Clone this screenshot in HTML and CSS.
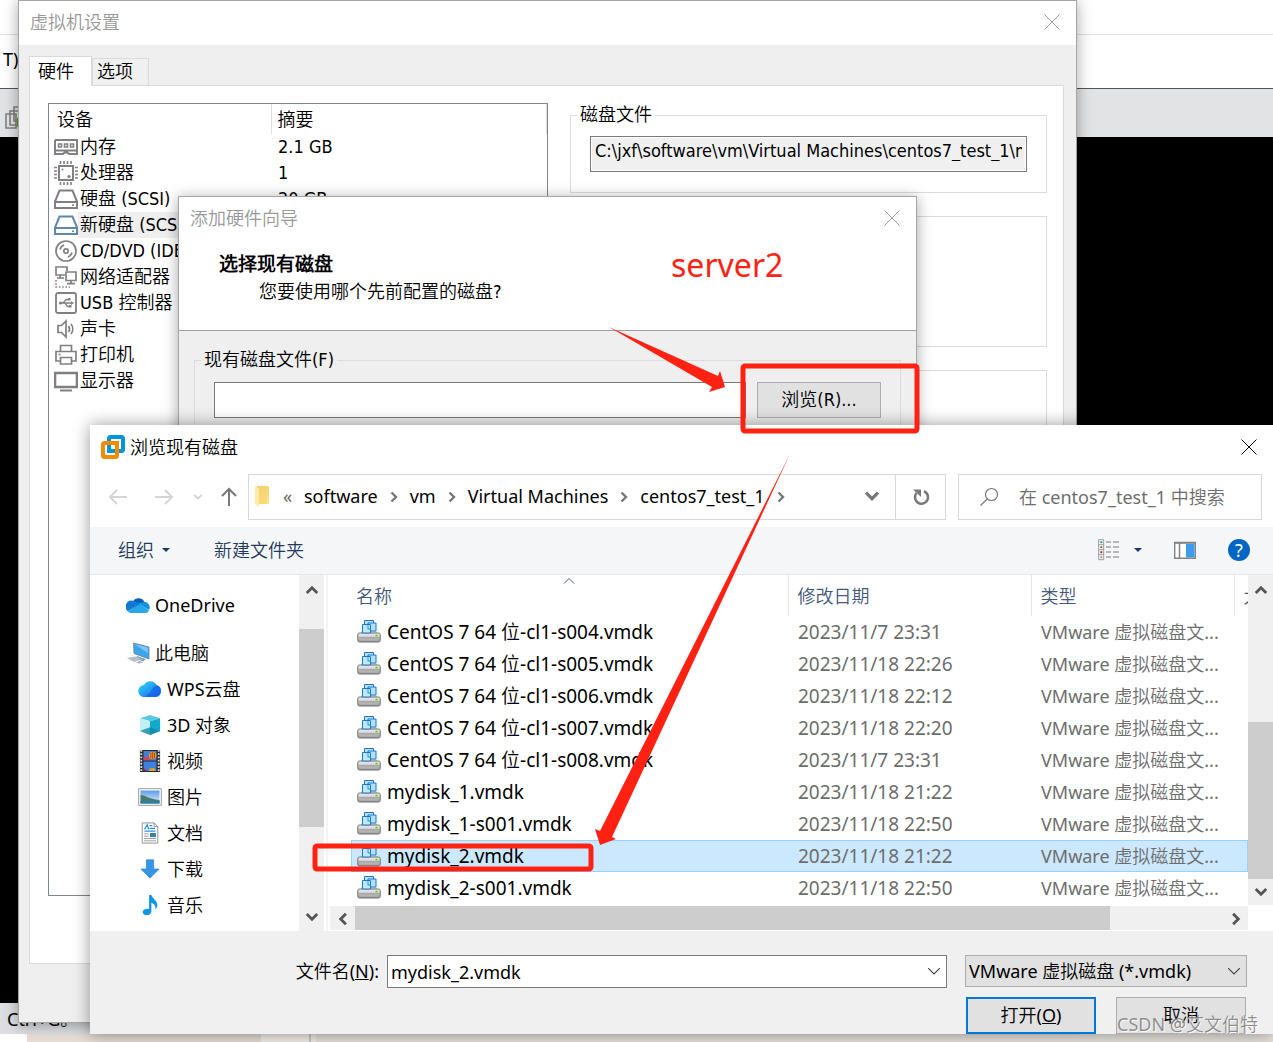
FILE: index.html
```html
<!DOCTYPE html>
<html lang="zh-CN">
<head>
<meta charset="utf-8">
<title>浏览现有磁盘</title>
<link rel="stylesheet" href="styles.css">
</head>
<body>
<svg class="sprite" aria-hidden="true">
  <defs>
    <linearGradient id="g-drive" x1="0" y1="0" x2="0" y2="1"><stop offset="0" stop-color="#f4f4f4"/><stop offset="1" stop-color="#9a9a9a"/></linearGradient>
    <linearGradient id="g-wps" x1="0" y1="0" x2="1" y2="1"><stop offset="0" stop-color="#2fe0f0"/><stop offset="1" stop-color="#1a5cf0"/></linearGradient>
    <linearGradient id="g-fold" x1="0" y1="0" x2="1" y2="1"><stop offset="0" stop-color="#f3cf6a"/><stop offset="1" stop-color="#fbdd80"/></linearGradient>
    <linearGradient id="g-sky" x1="0" y1="0" x2="0" y2="1"><stop offset="0" stop-color="#5b9be8"/><stop offset="1" stop-color="#e6f3fb"/></linearGradient>
  </defs>
  <symbol id="i-close" viewBox="0 0 16 16"><path d="M.5 .5l15 15M15.500 .5l-15 15" fill="none" stroke="currentColor" stroke-width="1"/></symbol>
  <symbol id="i-mem" viewBox="0 0 24 24"><g fill="none" stroke="#808080" stroke-width="2"><path d="M1 5h22v3M1 5V19h8l1.500-1.500h3L15 19h8V8M1 15.500h22"/><path d="M4.500 9h3v3h-3zM10.500 9h3v3h-3zM16.500 9h3v3h-3z" stroke-width="1.600"/></g></symbol>
  <symbol id="i-cpu" viewBox="0 0 24 24"><g fill="none" stroke="#808080"><rect x="5" y="5" width="14" height="14" stroke-width="2"/><path stroke-width="1.600" d="M6.500 0v3M10 0v3M13.500 0v3M17 0v3M6.500 21v3M10 21v3M13.500 21v3M17 21v3M0 6.500h3M0 10h3M0 13.500h3M0 17h3M21 6.500h3M21 10h3M21 13.500h3M21 17h3"/></g><circle cx="8.500" cy="8.500" r="1" fill="#808080"/><circle cx="15" cy="15.500" r="1.600" fill="#808080"/></symbol>
  <symbol id="i-disk" viewBox="0 0 24 24"><path d="M5.500 3.500h13L23 14.500V21H1v-6.500zM1 15h22" fill="none" stroke="currentColor" stroke-width="2"/><path d="M18 18.200h2" stroke="currentColor" stroke-width="1.600"/></symbol>
  <symbol id="i-cd" viewBox="0 0 24 24"><g fill="none" stroke="#808080" stroke-width="1.700"><circle cx="12" cy="12" r="10"/><circle cx="12" cy="12" r="2.200"/><path d="M6 10.500a6.500 6.500 0 0 1 4-4.500M18 13.500a6.500 6.500 0 0 1-4 4.500"/></g></symbol>
  <symbol id="i-net" viewBox="0 0 24 24"><g fill="none" stroke="#808080" stroke-width="1.700"><path d="M13 6V2H2v8h9M6 10v2.500M3 13h7M12 7h10v8.500H12zM17 15.500V18M13 18.700h8"/><path d="M2 15v7h14" stroke-dasharray="1.500 1.800"/></g></symbol>
  <symbol id="i-usb" viewBox="0 0 24 24"><rect x="2" y="2" width="20" height="20" rx="2" fill="none" stroke="#808080" stroke-width="1.800"/><path d="M6 12h12M9 12l3-3.500h2.500M11 12l2.500 3.500h2" fill="none" stroke="#808080" stroke-width="1.300"/><circle cx="6.500" cy="12" r="1.500" fill="#808080"/><path d="M17 10l3 2-3 2zM14 7h2.500v2.500H14zM15 14h2.500v2.500H15z" fill="#808080"/></symbol>
  <symbol id="i-sound" viewBox="0 0 24 24"><g fill="none" stroke="#808080" stroke-width="1.700"><path d="M4 8.500h3.500L12 4v16l-4.500-4.500H4z"/><path d="M14.500 9a5 5 0 0 1 0 6M17 7a8 8 0 0 1 0 10"/></g></symbol>
  <symbol id="i-print" viewBox="0 0 24 24"><g fill="none" stroke="#808080" stroke-width="1.700"><path d="M6.500 8V2.500h11V8M6 18H2V8.500h20V18h-4M6.500 14.500h11v6.500h-11z"/><path d="M4.500 11.500h2"/></g></symbol>
  <symbol id="i-screen" viewBox="0 0 24 24"><path d="M1 4h22v14H1z" fill="#fff" stroke="#808080" stroke-width="2.600"/><path d="M6 21.500h12" stroke="#808080" stroke-width="2"/></symbol>
  <symbol id="i-vm" viewBox="0 0 24 24"><rect x="8" y="2" width="14" height="14" rx="1.500" fill="none" stroke="#0095d9" stroke-width="4"/><rect x="2" y="8" width="14" height="14" rx="1.500" fill="none" stroke="#f38b00" stroke-width="4"/><path d="M8 9v7h6" fill="none" stroke="#0095d9" stroke-width="4"/><path d="M4 8h12v6" fill="none" stroke="#f38b00" stroke-width="4"/></symbol>
  <symbol id="i-arrow" viewBox="0 0 20 20"><path d="M19 10H2M9 3l-7 7 7 7" fill="none" stroke="currentColor" stroke-width="2"/></symbol>
  <symbol id="i-chev" viewBox="0 0 12 12"><path d="M1.500 3.500L6 8l4.500-4.500" fill="none" stroke="currentColor" stroke-width="2.400"/></symbol>
  <symbol id="i-thin" viewBox="0 0 12 12"><path d="M1 3.500l5 5 5-5" fill="none" stroke="currentColor" stroke-width="1"/></symbol>
  <symbol id="i-caret" viewBox="0 0 8 8"><path d="M0 2h8L4 6z" fill="#1e395b"/></symbol>
  <symbol id="i-folder" viewBox="0 0 16 22"><path d="M3 1h12v18H4z" fill="url(#g-fold)"/><path d="M1 1l4 2.500v18L1 19z" fill="#ffe9a6"/><path d="M13 12l2 2v5h-2z" fill="#ffe08a"/></symbol>
  <symbol id="i-refresh" viewBox="0 0 18 18"><path d="M12 3.200A6.500 6.500 0 1 1 4.500 5" fill="none" stroke="#7a7a7a" stroke-width="2.600"/><path d="M1 1.500h8V9z" fill="#7a7a7a"/></symbol>
  <symbol id="i-search" viewBox="0 0 20 20"><circle cx="12.500" cy="7.500" r="6" fill="none" stroke="#7a7a7a" stroke-width="1.200"/><path d="M8.300 12L1.500 18.500" stroke="#7a7a7a" stroke-width="1.300"/></symbol>
  <symbol id="i-view" viewBox="0 0 22 22"><path d="M.7 .7h5v20h-5zM.7 5.700h5M.7 10.700h5M.7 15.700h5" fill="#fff" stroke="#999"/><path d="M8 3h5m2 0h6M8 8h5m2 0h6M8 13h5m2 0h6M8 18h5m2 0h6" stroke="#777"/><path d="M2.300 2.200h2v2h-2z" fill="#29a"/><path d="M2.300 7.200h2v2h-2z" fill="#863"/><path d="M2.300 12.200h2v2h-2z" fill="#b22"/><path d="M2.300 17.200h2v2h-2z" fill="#999"/></symbol>
  <symbol id="i-pane" viewBox="0 0 22 18"><path d="M.7 1.500h20.600v15.800H.7z" fill="#fff" stroke="#838383" stroke-width="1.400"/><path d="M.7 2h20.600M5.500 2v15" stroke="#838383" stroke-width="1.500"/><path d="M12 3h8.500v13.500H12z" fill="#3d9be9"/></symbol>
  <symbol id="i-cloud" viewBox="0 0 24 18"><path d="M7 5.500A6.500 6.500 0 0 1 18.500 6L12 12z" fill="#0a5fb8"/><path d="M7 4.800A6 6 0 0 0 1.500 15l14-6.500z" fill="#1079d4"/><path d="M12 7.500l6.500-1.700A5.500 5.500 0 0 1 23 14z" fill="#1490df"/><path d="M1.500 15L14 8l9 6.500A3.500 3.500 0 0 1 20 17H5a5 5 0 0 1-3.500-2z" fill="#28a8ea"/></symbol>
  <symbol id="i-pc" viewBox="0 0 24 24"><path d="M7.500 2L23 6v12L8 12.500z" fill="#3aa6f0" stroke="#6d7f8e" stroke-width=".8"/><path d="M8 3l14 9V6.500z" fill="#7cc6f8"/><path d="M11 15l9 3-3 2.500-8-3z" fill="#8aa3b5"/><path d="M1 17l8-1.500 7 3-8 2.500z" fill="#b8bec4"/><path d="M10 21.500l4-1.500 3 1.500-4 1z" fill="#a5adb4"/></symbol>
  <symbol id="i-wps" viewBox="0 0 24 20"><path d="M6.500 18a6 6 0 0 1-.5-12 7 7 0 0 1 12.500 0A6.200 6.200 0 0 1 17.500 18z" fill="url(#g-wps)"/><path d="M9 16c4-1 5-9 10-9.700A6 6 0 0 1 17.500 18H7z" fill="#1264ec" opacity=".75"/></symbol>
  <symbol id="i-cube" viewBox="0 0 24 24"><path d="M12 1l11 3.500-11 3.500L1 4.500z" fill="#58c9e0"/><path d="M1 4.500L12 8v15L1 18.500z" fill="#c3eef2"/><path d="M23 4.500L12 8v15l11-4.500z" fill="#12a9cf"/><path d="M1 18.500l11-4 11 4L12 23z" fill="#138ba5" opacity=".8"/></symbol>
  <symbol id="i-film" viewBox="0 0 24 24"><path d="M1 0h22v24H1z" fill="#2b2b2b"/><path d="M5 1h14v10.500H5zM5 12.500h14V23H5z" fill="#3f7fe0"/><path d="M2.500 0v24M21.500 0v24" stroke="#ddd" stroke-width="2" stroke-dasharray="2 1.500"/><circle cx="15" cy="6" r="4" fill="#e8b020"/><path d="M15 2v8M13 3v6M17 3v6" stroke="#b3261e" fill="none"/><path d="M5 8l5-1 3 4H5z" fill="#d0485a"/><path d="M11 23a3.500 3.500 0 0 1 7 0z" fill="#e0a61c"/><path d="M5 20l4 3H5z" fill="#c14"/></symbol>
  <symbol id="i-pic" viewBox="0 0 24 18"><path d="M.7 .7h22.600v16.600H.7z" fill="#fff" stroke="#9a9a9a"/><path d="M2.500 2.500h19v13h-19z" fill="url(#g-sky)"/><path d="M2.500 7c5 0 8 4 19 5v3.500h-19z" fill="#4a7b6b"/><path d="M2.500 13h19v2.500h-19z" fill="#2e7dab"/></symbol>
  <symbol id="i-doc" viewBox="0 0 24 24"><path d="M3.500 1h13l4 4v18h-17z" fill="#fff" stroke="#8a8a8a"/><path d="M16.500 1v4h4" fill="none" stroke="#8a8a8a"/><path d="M6 8l3-5 1.500 5M11.500 4h3M11.500 7h6M6 10h12" stroke="#2d8fe0" stroke-width="1.400" fill="none"/><path d="M5.500 13h5M5.500 15.500h5M5.500 18h13M5.500 20.500h13" stroke="#999"/><path d="M12 12h6.500v4.500H12z" fill="#3a7fa8"/></symbol>
  <symbol id="i-down" viewBox="0 0 24 24"><path d="M8 2h8v10h6L12 22 2 12h6z" fill="#3795e8" stroke="#2b80cf" stroke-width=".7"/></symbol>
  <symbol id="i-note" viewBox="0 0 24 24"><path d="M11 1h2.500c1 4 6.500 6 6.500 11 0 2-.8 3.500-2 5 .5-4-1.500-6.500-4.500-7.500V19c0 2.500-2.500 4-5 4S4 21.500 4 19.500 6.500 16 9 16c.8 0 1.500.1 2 .4z" fill="#0f95ea"/></symbol>
  <symbol id="i-vmdk" viewBox="0 0 24 24"><path d="M3 14l2.500-4h13L21 14z" fill="#e2e2e2"/><rect x=".8" y="13" width="22.400" height="9" rx="1.800" fill="url(#g-drive)" stroke="#6d6d6d"/><path d="M2 17.800h20" stroke="#8f8f8f" stroke-width=".8"/><circle cx="19.500" cy="15.500" r="1.100" fill="#4be01c"/><g fill="#b5e2fd" stroke="#1c77c9" stroke-width="1"><path d="M7.500 .5h9v8h-9z"/><path d="M11 3h8v8h-8z"/><path d="M5.500 4.500h8v8.500h-8z" fill="#bfe8ff"/></g><path d="M11 4.500v4.500h2.500" fill="none" stroke="#1c77c9" stroke-width=".8"/></symbol>
  <symbol id="i-stack" viewBox="0 0 24 24"><g fill="#e4e5e7" stroke="#808080" stroke-width="1.600"><path d="M1 8h10v14H1zM5 5h10v14H5zM9 1h10v14H9z"/></g><path d="M12 12h12v9H12z" fill="#5aa02c"/></symbol>
</svg>

<main class="desktop">
  <div class="host">
    <div class="host-title"></div>
    <div class="host-menu">T)</div>
    <div class="host-tools"><svg width="24" height="24"><use href="#i-stack"/></svg></div>
    <div class="host-screen"></div>
    <div class="host-status">Ctrl+G。</div>
    <div class="host-strip"></div>
  </div>

  <section class="win settings" aria-label="虚拟机设置">
    <header class="bar">
      <h2>虚拟机设置</h2>
      <button class="x" aria-label="关闭"><svg width="16" height="16"><use href="#i-close"/></svg></button>
    </header>
    <div class="settings-body">
      <div class="tabs" role="tablist">
        <button class="tab on" role="tab">硬件</button>
        <button class="tab" role="tab">选项</button>
      </div>
      <div class="panel">
        <div class="devices">
          <table>
            <colgroup><col class="c-dev"><col></colgroup>
            <thead><tr><th>设备</th><th>摘要</th></tr></thead>
            <tbody>
              <tr><td><div><svg><use href="#i-mem"/></svg><span>内存</span></div></td><td>2.1 GB</td></tr>
              <tr><td><div><svg><use href="#i-cpu"/></svg><span>处理器</span></div></td><td>1</td></tr>
              <tr><td><div><svg><use href="#i-disk"/></svg><span>硬盘 (SCSI)</span></div></td><td>20 GB</td></tr>
              <tr class="picked"><td><div><svg><use href="#i-disk"/></svg><span>新硬盘 (SCSI)</span></div></td><td></td></tr>
              <tr><td><div><svg><use href="#i-cd"/></svg><span>CD/DVD (IDE)</span></div></td><td></td></tr>
              <tr><td><div><svg><use href="#i-net"/></svg><span>网络适配器</span></div></td><td></td></tr>
              <tr><td><div><svg><use href="#i-usb"/></svg><span>USB 控制器</span></div></td><td></td></tr>
              <tr><td><div><svg><use href="#i-sound"/></svg><span>声卡</span></div></td><td></td></tr>
              <tr><td><div><svg><use href="#i-print"/></svg><span>打印机</span></div></td><td></td></tr>
              <tr><td><div><svg><use href="#i-screen"/></svg><span>显示器</span></div></td><td></td></tr>
            </tbody>
          </table>
        </div>
        <div class="groups">
          <fieldset>
            <legend>磁盘文件</legend>
            <input class="path" aria-label="磁盘文件" readonly value="C:\jxf\software\vm\Virtual Machines\centos7_test_1\mydisk_1.vmdk">
          </fieldset>
          <fieldset class="mid"></fieldset>
          <fieldset class="rest"></fieldset>
        </div>
      </div>
    </div>
  </section>

  <section class="win wizard" aria-label="添加硬件向导">
    <header class="bar">
      <h2>添加硬件向导</h2>
      <button class="x" aria-label="关闭"><svg width="16" height="16"><use href="#i-close"/></svg></button>
    </header>
    <div class="wizard-head">
      <h3>选择现有磁盘</h3>
      <p>您要使用哪个先前配置的磁盘?</p>
    </div>
    <div class="wizard-body">
      <fieldset>
        <legend>现有磁盘文件(F)</legend>
        <div class="pick">
          <input aria-label="现有磁盘文件(F)">
          <button>浏览(R)...</button>
        </div>
      </fieldset>
    </div>
  </section>

  <section class="browse" aria-label="浏览现有磁盘">
    <header class="bar">
      <svg width="24" height="24"><use href="#i-vm"/></svg>
      <h2>浏览现有磁盘</h2>
      <button class="x" aria-label="关闭"><svg width="16" height="16"><use href="#i-close"/></svg></button>
    </header>
    <div class="nav">
      <div class="nav-buttons">
        <button class="off" aria-label="后退"><svg width="20" height="20"><use href="#i-arrow"/></svg></button>
        <button class="off" aria-label="前进"><svg class="flip" width="20" height="20"><use href="#i-arrow"/></svg></button>
        <button class="off recent" aria-label="最近"><svg width="10" height="10"><use href="#i-chev"/></svg></button>
        <button class="up" aria-label="上移"><svg class="turn" width="20" height="20"><use href="#i-arrow"/></svg></button>
      </div>
      <div class="address">
        <svg width="16" height="22"><use href="#i-folder"/></svg>
        <span class="more">«</span>
        <a href="#">software</a><svg class="sep" width="12" height="12"><use href="#i-chev"/></svg>
        <a href="#">vm</a><svg class="sep" width="12" height="12"><use href="#i-chev"/></svg>
        <a href="#">Virtual Machines</a><svg class="sep" width="12" height="12"><use href="#i-chev"/></svg>
        <a href="#">centos7_test_1</a><svg class="sep" width="12" height="12"><use href="#i-chev"/></svg>
        <button class="drop" aria-label="展开"><svg width="16" height="16"><use href="#i-chev"/></svg></button>
        <button class="reload" aria-label="刷新"><svg width="18" height="18"><use href="#i-refresh"/></svg></button>
      </div>
      <div class="search">
        <svg width="20" height="20"><use href="#i-search"/></svg>
        <input aria-label="搜索" placeholder="在 centos7_test_1 中搜索">
      </div>
    </div>
    <div class="tools">
      <button>组织<svg width="8" height="8"><use href="#i-caret"/></svg></button>
      <button class="new">新建文件夹</button>
      <button class="view" aria-label="视图"><svg width="22" height="22"><use href="#i-view"/></svg><svg width="8" height="8"><use href="#i-caret"/></svg></button>
      <button class="pane" aria-label="预览窗格"><svg width="22" height="18"><use href="#i-pane"/></svg></button>
      <button class="help" aria-label="帮助">?</button>
    </div>
    <div class="content">
      <nav class="side">
        <a href="#" class="cloud"><svg width="24" height="18"><use href="#i-cloud"/></svg>OneDrive</a>
        <a href="#" class="pc"><svg width="24" height="24"><use href="#i-pc"/></svg>此电脑</a>
        <a href="#" class="sub"><svg><use href="#i-wps"/></svg>WPS云盘</a>
        <a href="#" class="sub"><svg><use href="#i-cube"/></svg>3D 对象</a>
        <a href="#" class="sub"><svg><use href="#i-film"/></svg>视频</a>
        <a href="#" class="sub"><svg><use href="#i-pic"/></svg>图片</a>
        <a href="#" class="sub"><svg><use href="#i-doc"/></svg>文档</a>
        <a href="#" class="sub"><svg><use href="#i-down"/></svg>下载</a>
        <a href="#" class="sub"><svg><use href="#i-note"/></svg>音乐</a>
      </nav>
      <div class="vbar side-bar">
        <span class="cap"><svg class="half" width="14" height="14"><use href="#i-chev"/></svg></span>
        <span class="before"></span><span class="thumb"></span><span class="after"></span>
        <span class="cap"><svg width="14" height="14"><use href="#i-chev"/></svg></span>
      </div>
      <div class="split"></div>
      <div class="files">
        <div class="list">
          <table>
            <colgroup><col><col class="c-date"><col class="c-type"><col class="c-size"></colgroup>
            <thead><tr><th>名称<svg class="sort" width="12" height="12"><use href="#i-thin"/></svg></th><th>修改日期</th><th>类型</th><th>大小</th></tr></thead>
            <tbody>
              <tr><td><div><svg><use href="#i-vmdk"/></svg>CentOS 7 64 位-cl1-s004.vmdk</div></td><td>2023/11/7 23:31</td><td>VMware 虚拟磁盘文...</td><td></td></tr>
              <tr><td><div><svg><use href="#i-vmdk"/></svg>CentOS 7 64 位-cl1-s005.vmdk</div></td><td>2023/11/18 22:26</td><td>VMware 虚拟磁盘文...</td><td></td></tr>
              <tr><td><div><svg><use href="#i-vmdk"/></svg>CentOS 7 64 位-cl1-s006.vmdk</div></td><td>2023/11/18 22:12</td><td>VMware 虚拟磁盘文...</td><td></td></tr>
              <tr><td><div><svg><use href="#i-vmdk"/></svg>CentOS 7 64 位-cl1-s007.vmdk</div></td><td>2023/11/18 22:20</td><td>VMware 虚拟磁盘文...</td><td></td></tr>
              <tr><td><div><svg><use href="#i-vmdk"/></svg>CentOS 7 64 位-cl1-s008.vmdk</div></td><td>2023/11/7 23:31</td><td>VMware 虚拟磁盘文...</td><td></td></tr>
              <tr><td><div><svg><use href="#i-vmdk"/></svg>mydisk_1.vmdk</div></td><td>2023/11/18 21:22</td><td>VMware 虚拟磁盘文...</td><td></td></tr>
              <tr><td><div><svg><use href="#i-vmdk"/></svg>mydisk_1-s001.vmdk</div></td><td>2023/11/18 22:50</td><td>VMware 虚拟磁盘文...</td><td></td></tr>
              <tr class="picked"><td><div><svg><use href="#i-vmdk"/></svg>mydisk_2.vmdk</div></td><td>2023/11/18 21:22</td><td>VMware 虚拟磁盘文...</td><td></td></tr>
              <tr><td><div><svg><use href="#i-vmdk"/></svg>mydisk_2-s001.vmdk</div></td><td>2023/11/18 22:50</td><td>VMware 虚拟磁盘文...</td><td></td></tr>
            </tbody>
          </table>
        </div>
        <div class="hbar">
          <span class="cap"><svg class="left" width="14" height="14"><use href="#i-chev"/></svg></span>
          <span class="thumb"></span><span class="after"></span>
          <span class="cap"><svg class="right" width="14" height="14"><use href="#i-chev"/></svg></span>
        </div>
      </div>
      <div class="vbar file-bar">
        <span class="cap"><svg class="half" width="14" height="14"><use href="#i-chev"/></svg></span>
        <span class="before"></span><span class="thumb"></span>
        <span class="cap"><svg width="14" height="14"><use href="#i-chev"/></svg></span>
      </div>
    </div>
    <form class="foot">
      <div class="fields">
        <label for="fname">文件名(<u>N</u>):</label>
        <div class="combo"><input id="fname" value="mydisk_2.vmdk"><svg width="14" height="14"><use href="#i-thin"/></svg></div>
        <div class="combo type"><select aria-label="文件类型"><option>VMware 虚拟磁盘 (*.vmdk)</option></select><svg width="14" height="14"><use href="#i-thin"/></svg></div>
      </div>
      <div class="actions">
        <button type="button" class="open">打开(<u>O</u>)</button>
        <button type="button">取消</button>
      </div>
    </form>
  </section>

  <div class="marks">
    <svg width="100%" height="100%" aria-hidden="true">
      <g fill="#ff2213">
        <path d="M609 327l109 49 2-5 5 16-16 5 3-5z"/>
        <path d="M790 454L600 831l-5-2 5 16 16-6-4-2z"/>
      </g>
      <g fill="none" stroke="#ff2213" stroke-width="5">
        <rect x="743" y="366" width="174" height="65" rx="2"/>
        <rect x="315" y="846" width="276" height="23" rx="2"/>
      </g>
    </svg>
    <span class="note">server2</span>
    <span class="credit">CSDN @艾文伯特</span>
  </div>
</main>
</body>
</html>
```
FILE: styles.css
```css
* { box-sizing: border-box; }

body {
  margin: 0;
  font: 18px/24px "Noto Sans", "Noto Sans CJK SC DemiLight", "Noto Sans CJK SC", sans-serif;
  color: #000;
}

h2, h3, p { margin: 0; font-size: 18px; font-weight: 400; }
button, input, select { font: inherit; color: inherit; margin: 0; }
button { border: 0; padding: 0; background: none; }
a { color: inherit; text-decoration: none; }
svg { display: block; flex: none; }
.sprite { position: absolute; width: 0; height: 0; }

.desktop { position: relative; height: 100vh; min-height: 960px; overflow: hidden; }

/* Host application behind the dialogs */
.host { height: 100%; display: flex; flex-direction: column; background: #fff; }
.host-title { height: 35px; border-bottom: 1px solid #e0e0e0; }
.host-menu { height: 53px; padding: 12px 3px; }
.host-tools { height: 49px; padding: 17px 5px; background: #e2e3e5; border-top: 1px solid #555; }
.host-screen { flex: 1; background: #000; }
.host-status { height: 31px; padding: 4px 7px; background: #dcdee1; }
.host-strip { height: 8px; background: linear-gradient(90deg, #fff 27px, #e6ddd5 27px 261px, #f4efeb 261px 309px, #ccc8c5 309px 311px, #f1ece8 311px 316px, #e6e1db 316px); }

/* Windows */
.win { position: absolute; border: 1px solid #a5a5a5; background: #efefef; box-shadow: 0 2px 14px rgba(0, 0, 0, .35); display: flex; flex-direction: column; }
.settings { left: 18px; right: 196px; top: 0; bottom: 19px; font-family: "DejaVu Sans Condensed", "Noto Sans CJK SC DemiLight", "Noto Sans CJK SC", sans-serif; }
.wizard { left: 178px; right: 356px; top: 196px; font-family: "DejaVu Sans Condensed", "Noto Sans CJK SC DemiLight", "Noto Sans CJK SC", sans-serif; }
.bar { display: flex; align-items: center; height: 44px; padding: 0 16px 2px 11px; background: #fff; }
.win .bar { color: #999; font-family: "Noto Sans", "Noto Sans CJK SC DemiLight", "Noto Sans CJK SC", sans-serif; }
.bar .x { margin-left: auto; }

.settings-body { flex: 1; display: flex; flex-direction: column; padding: 11px 12px 58px 10px; }
.tabs { display: flex; align-items: flex-end; height: 29px; }
.tab { height: 27px; width: 57px; padding: 0 4px; text-align: left; border: 1px solid #dadada; border-bottom: 0; background: #f0f0f0; }
.tab.on { position: relative; width: 63px; height: 30px; margin-bottom: -1px; padding: 0 8px; background: #fff; }
.panel { flex: 1; display: grid; grid-template-columns: 500fr 477fr; gap: 22px; padding: 17px 16px 67px 18px; border: 1px solid #dadada; background: #fff; }

.devices { border: 1px solid #7e8490; }
.devices table { width: 100%; border-collapse: collapse; table-layout: fixed; white-space: nowrap; }
.c-dev { width: 222px; }
.devices th { height: 30px; padding: 2px 8px 0; text-align: left; font-weight: 400; }
.devices th + th { padding: 2px 6px 0; border-left: 1px solid #dedede; border-right: 1px solid #dedede; }
.devices td { height: 26px; padding: 0; }
.devices td + td { padding: 0 7px; }
.devices td div { display: flex; align-items: center; height: 26px; padding-left: 5px; color: #808080; }
.devices td span { flex: 1; padding-left: 2px; color: #000; line-height: 26px; }
.devices td svg { width: 24px; height: 24px; }
.devices .picked div { color: #5f86ab; }
.devices .picked span { background: #efefef; }

.groups { display: flex; flex-direction: column; gap: 23px; }
fieldset { min-width: 0; margin: 0; padding: 9px 19px 20px; border: 1px solid #dcdcdc; }
legend { margin-left: -13px; padding: 0 3px; }
fieldset.mid { height: 131px; }
fieldset.rest { flex: 1; }
.path { display: block; width: 100%; height: 36px; padding: 0 4px 8px; border: 1px solid #7a7a7a; box-shadow: inset 0 0 0 1px #fff; background: #f0f0f0; }

.wizard-head { padding: 9px 40px 24px; background: #fff; border-bottom: 1px solid #a0a0a0; line-height: 28px; }
.wizard-head h3 { font-size: 19px; font-weight: 700; }
.wizard-head p { padding-left: 40px; }
.wizard-body { padding: 17px 15px 40px; }
.wizard-body fieldset { padding-bottom: 40px; }
.pick { display: flex; gap: 11px; padding-top: 1px; }
.pick input { flex: 1; min-width: 0; height: 36px; border: 1px solid #7a7a7a; background: #fff; }
.pick button { width: 124px; height: 36px; border: 1px solid #adadad; background: #e1e1e1; }

/* File browser */
.browse { position: absolute; left: 90px; right: 0; top: 425px; bottom: 8px; display: flex; flex-direction: column; background: #fff; box-shadow: 0 0 16px rgba(0, 0, 0, .4); }
.browse .bar { height: 45px; gap: 5px; }

.nav { display: flex; gap: 12px; height: 57px; padding: 4px 11px 7px 5px; }
.nav-buttons { display: flex; margin-right: -12px; color: #777; }
.nav-buttons button { width: 46px; display: grid; place-items: center; }
.nav-buttons .off { color: #d4d4d4; }
.nav-buttons .recent { width: 22px; }
.nav-buttons .up { width: 39px; }
.flip { transform: rotate(180deg); }
.turn { transform: rotate(90deg); }
.half { transform: rotate(180deg); }
.left { transform: rotate(90deg); }
.right, .sep { transform: rotate(-90deg); }

.address { flex: 1; display: flex; align-items: center; padding: 0 0 2px 5px; border: 1px solid #d9d9d9; white-space: nowrap; }
.address .more { width: 34px; padding-left: 13px; color: #666; }
.sep { margin: 2px 10px 0; color: #777; }
.drop { margin-left: auto; width: 46px; display: grid; place-items: center; color: #777; }
.reload { width: 50px; align-self: stretch; margin-bottom: -2px; display: grid; place-items: center; border-left: 1px solid #d9d9d9; }
.search { width: 304px; display: flex; align-items: center; gap: 20px; padding-left: 20px; border: 1px solid #d9d9d9; }
.search input { flex: 1; min-width: 0; padding: 0; border: 0; background: none; }
.search input::placeholder { color: #6d6d6d; opacity: 1; }

.tools { display: flex; align-items: center; height: 48px; padding: 0 23px 2px 28px; background: #f4f6f8; border-bottom: 1px solid #e5e7e9; color: #1e395b; }
.tools button { display: flex; align-items: center; gap: 8px; }
.tools .new { margin-left: 44px; }
.tools .view { gap: 14px; margin-left: auto; }
.tools .pane { margin: 0 32px; }
.tools .help { width: 22px; height: 22px; justify-content: center; border-radius: 50%; background: #0066c4; color: #fff; }

.content { flex: 1; min-height: 0; display: flex; }
.side { width: 209px; padding-top: 12px; overflow: hidden; }
.side a { display: flex; align-items: center; gap: 5px; height: 36px; padding-left: 36px; }
.side .cloud { margin-bottom: 12px; }
.side .sub { padding-left: 48px; }
.side .sub svg { width: 24px; height: 22px; }

.vbar, .hbar { display: flex; background: #f0f0f0; }
.vbar { flex-direction: column; width: 25px; }
.cap { width: 25px; height: 25px; display: grid; place-items: center; color: #555; }
.vbar .cap { height: 29px; }
.thumb { background: #cdcdcd; }
.side-bar .before { flex: 25; }
.side-bar .thumb { flex: 198; }
.side-bar .after { flex: 75; }
.split { width: 6px; border-left: 2px solid #fff; border-right: 2px solid #fff; background: #f4f4f4; }
.file-bar { margin-bottom: 26px; }
.file-bar .before { flex: 118; }
.file-bar .thumb { flex: 158; }
.file-bar .cap:last-child { height: 26px; }

.files { flex: 1; min-width: 0; display: flex; flex-direction: column; }
.list { flex: 1; min-height: 0; padding-left: 21px; overflow: hidden; }
.list table { width: 100%; border-collapse: collapse; table-layout: fixed; white-space: nowrap; }
.c-date { width: 243px; }
.c-type { width: 203px; }
.c-size { width: 14px; }
.list th { position: relative; height: 41px; padding: 0 5px; text-align: left; font-weight: 400; color: #44597c; overflow: hidden; }
.list th + th { padding: 0 9px; border-left: 1px solid #e5e5e5; }
.sort { position: absolute; left: 50%; top: 0; transform: translateX(-50%) rotate(180deg); }
.list td { height: 32px; padding: 0 10px; color: #6d6d6d; overflow: hidden; }
.list td:nth-child(-n+2) { font-size: 19px; }
.list td:first-child { padding: 0 6px; color: #000; }
.list td div { display: flex; align-items: center; gap: 6px; }
.list td svg { width: 24px; height: 24px; }
.list .picked { background: #cce8ff; box-shadow: inset 0 0 0 1px #99d1ff; }
.hbar { height: 24px; margin-bottom: 1px; }
.hbar .thumb { flex: 754; height: 24px; }
.hbar .after { flex: 113; }

.foot { padding: 24px 26px 0 0; background: #f0f0f0; height: 103px; }
.fields { display: flex; }
.fields label { width: 289px; margin-right: 8px; text-align: right; line-height: 32px; white-space: nowrap; }
.combo { position: relative; flex: 1; height: 33px; }
.combo input, .combo select { width: 100%; height: 100%; padding: 0 3px; border: 1px solid #7a7a7a; border-radius: 0; background: #fff; appearance: none; }
.combo svg { position: absolute; right: 6px; top: 9px; color: #444; pointer-events: none; }
.combo.type { flex: none; width: 282px; height: 32px; margin-left: 18px; }
.combo.type select { border-color: #adadad; background: #e1e1e1; }
.actions { display: flex; justify-content: flex-end; gap: 20px; padding: 9px 1px 0 0; }
.actions button { width: 130px; height: 37px; padding-bottom: 2px; border: 1px solid #adadad; background: #e1e1e1; }
.actions .open { border: 2px solid #0078d7; }

/* Annotations over the windows */
.marks { position: absolute; inset: 0; pointer-events: none; }
.note { position: absolute; left: 671px; top: 245px; font-size: 32px; line-height: 40px; color: #ff2213; }
.credit { position: absolute; right: 15px; bottom: 6px; font-size: 18px; white-space: nowrap; color: rgba(125, 125, 125, .85); text-shadow: 1px 1px 0 rgba(255, 255, 255, .8); }
```
